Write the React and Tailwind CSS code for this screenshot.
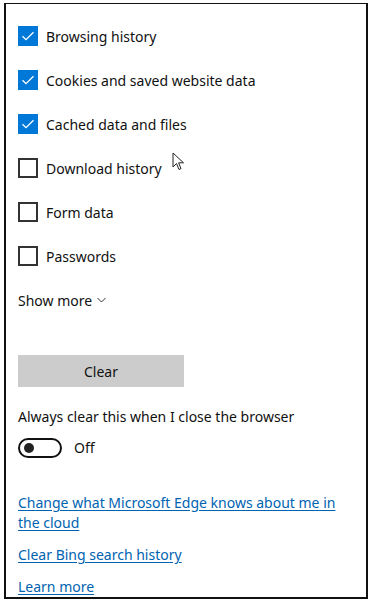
import { useState } from 'react'

const items = [
  { label: 'Browsing history', checked: true },
  { label: 'Cookies and saved website data', checked: true },
  { label: 'Cached data and files', checked: true },
  { label: 'Download history', checked: false },
  { label: 'Form data', checked: false },
  { label: 'Passwords', checked: false },
]

function Checkbox({ checked }) {
  if (checked) {
    return (
      <span className="w-5 h-5 shrink-0 bg-[#0078d7] flex items-center justify-center">
        <svg width="14" height="14" viewBox="0 0 14 14" fill="none" stroke="white" strokeWidth="1.3">
          <path d="M1.5 7.2 L5 10.7 L12.5 3.2" />
        </svg>
      </span>
    )
  }
  return <span className="w-5 h-5 shrink-0 border-2 border-[#333]" />
}

export default function App() {
  const [state, setState] = useState(items.map((i) => i.checked))

  return (
    <div
      className="w-[372px] h-[603px] bg-white pl-[4px] pt-[3px] text-[14px] text-[#111]"
      style={{ fontFamily: '"Noto Sans", "Open Sans", sans-serif' }}
    >
      <div className="relative w-[364px] h-[596px] border-2 border-[#111] border-t-[1.5px] overflow-hidden pl-[12px] pt-[10px]">
        {/* Checkbox list */}
        {items.map((it, i) => (
          <div
            key={it.label}
            className="h-[44px] flex items-center gap-[8px] cursor-default"
            onClick={() => setState((s) => s.map((v, j) => (j === i ? !v : v)))}
          >
            <Checkbox checked={state[i]} />
            <span>{it.label}</span>
          </div>
        ))}

        {/* Show more */}
        <div className="h-[44px] flex items-center gap-[5px]">
          <span>Show more</span>
          <svg width="9" height="6" viewBox="0 0 9 6" fill="none" stroke="#333" strokeWidth="1">
            <path d="M0.5 1 L4.5 5 L8.5 1" />
          </svg>
        </div>

        {/* Clear */}
        <button className="mt-[33px] w-[166px] h-[32px] bg-[#cccccc] text-[#111] flex items-center justify-center">
          Clear
        </button>

        <div className="mt-[20px] leading-[20px]">Always clear this when I close the browser</div>

        {/* Toggle */}
        <div className="mt-[10px] flex items-center gap-[12px]">
          <span className="w-[44px] h-[20px] rounded-full border-2 border-[#111] flex items-center pl-[4px]">
            <span className="w-[10px] h-[10px] rounded-full bg-[#222]" />
          </span>
          <span>Off</span>
        </div>

        {/* Links */}
        <div className="mt-[35px] flex flex-col gap-[12px] text-[#0063b1] leading-[20px] w-[330px]">
          <a className="underline underline-offset-2">Change what Microsoft Edge knows about me in the cloud</a>
          <a className="underline underline-offset-2">Clear Bing search history</a>
          <a className="underline underline-offset-2">Learn more</a>
        </div>

        {/* Mouse pointer */}
        <svg className="absolute left-[166px] top-[148px]" width="14" height="20" viewBox="0 0 14 20" fill="white" stroke="#222" strokeWidth="1">
          <path d="M1 1 L1 15 L4.5 11.5 L7 17.5 L9 16.6 L6.6 10.8 L11.5 10.8 Z" />
        </svg>
      </div>
    </div>
  )
}
